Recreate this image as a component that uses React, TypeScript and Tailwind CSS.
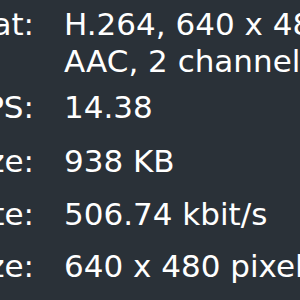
import React from "react";

const rows = [
  { label: "Format:", values: ["H.264, 640 x 480, Millions", "AAC, 2 channels, 44100 Hz"], gap: "" },
  { label: "FPS:", values: ["14.38"], gap: "mt-[9px]" },
  { label: "Data Size:", values: ["938 KB"], gap: "mt-[17px]" },
  { label: "Data Rate:", values: ["506.74 kbit/s"], gap: "mt-4" },
  { label: "Current Size:", values: ["640 x 480 pixels"], gap: "mt-[15px]" },
];

const App: React.FC = () => {
  return (
    <div className="w-[300px] h-[300px] overflow-hidden bg-[#2a3138] text-white font-['DejaVu_Sans',sans-serif] text-[31px] leading-[37px] pt-[6px]">
      {rows.map((row) => (
        <div key={row.label} className={`flex gap-[30px] ${row.gap}`}>
          {/* label column, cut off at the left edge */}
          <div className="w-[34px] shrink-0 flex justify-end whitespace-nowrap">
            <span>{row.label}</span>
          </div>
          <div className="flex flex-col whitespace-nowrap">
            {row.values.map((v) => (
              <span key={v}>{v}</span>
            ))}
          </div>
        </div>
      ))}
    </div>
  );
};

export default App;
